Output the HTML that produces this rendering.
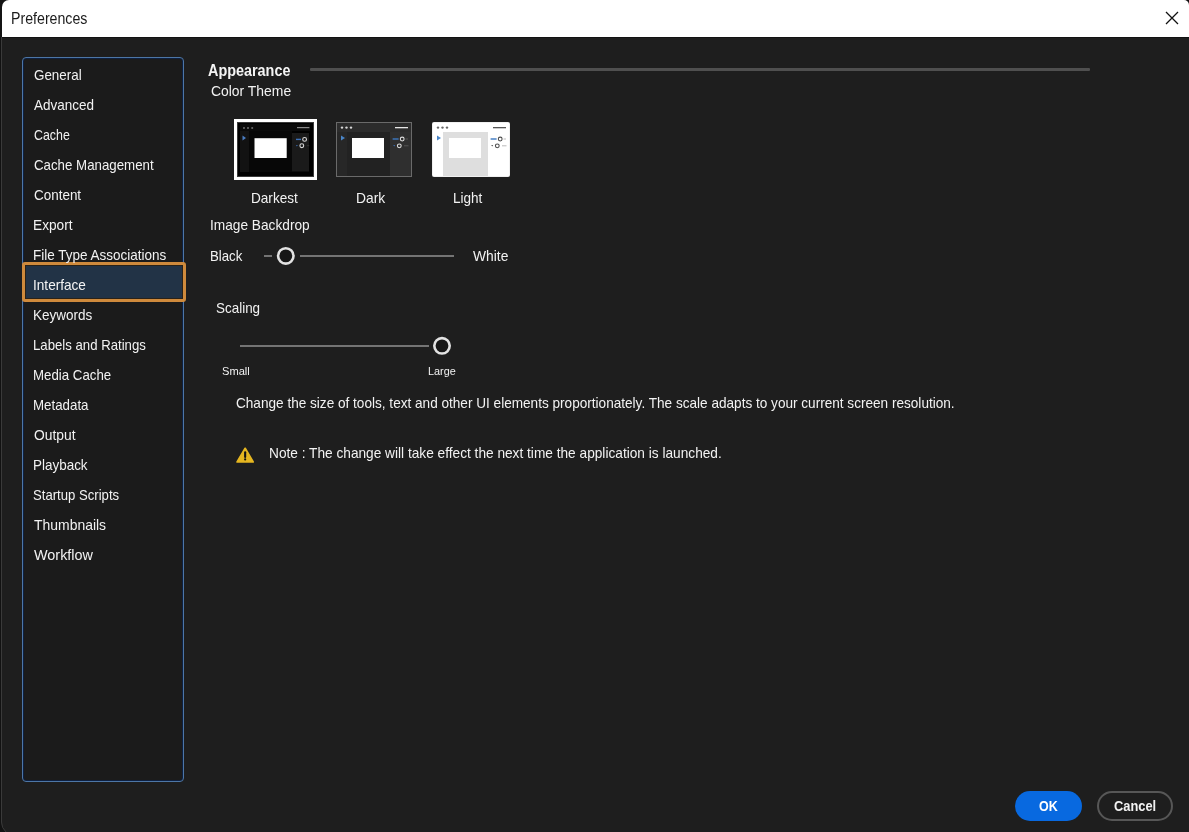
<!DOCTYPE html>
<html><head><meta charset="utf-8">
<style>
html,body{margin:0;padding:0;}
body{width:1189px;height:832px;overflow:hidden;background:#1e1e1e;position:relative;font-family:"Liberation Sans",sans-serif;}
.a{position:absolute;white-space:nowrap;line-height:1;transform-origin:0 0;filter:grayscale(1);}
#titlebar{position:absolute;left:0;top:0;width:1189px;height:37px;background:#fff;border-top-right-radius:5px;}#cornerR{position:absolute;left:1181px;top:0;width:8px;height:8px;background:#111;}
#leftedge{position:absolute;left:0;top:0;width:1px;height:832px;background:#121212;}#ttl{position:absolute;left:0;top:0;width:2px;height:37px;background:#141414;}#tline{position:absolute;left:0;top:37px;width:1189px;height:1px;background:#121212;}
#leftedge2{position:absolute;left:1px;top:37px;width:1px;height:795px;background:#3a3a3a;}
#corner{position:absolute;left:0;top:0;width:10px;height:10px;background:#151515;}
#cornerw{position:absolute;left:2px;top:0;width:16px;height:16px;background:#fff;border-top-left-radius:7px;}
.side{position:absolute;left:22px;top:57px;width:160px;height:723px;border:1px solid #4d76a6;border-radius:4px;background:#1b1b1b;box-shadow:inset 0 0 0 1px #0e2040;}
.item{position:absolute;left:33px;font-size:13.4px;color:#e3e3e3;}
.hl{position:absolute;left:22px;top:262px;width:158px;height:34px;border:3px solid #cf8a3c;border-radius:3px;background:#223346;box-shadow:inset 0 0 0 1px #2a2218;}
.t14{font-size:13.9px;color:#e3e3e3;}
</style></head><body>
<div id="cornerR"></div><div id="titlebar"></div>
<div id="corner"></div><div id="cornerw"></div>
<div id="leftedge"></div><div id="ttl"></div><div id="tline"></div><div id="leftedge2"></div><svg style="position:absolute;left:0;top:822px" width="10" height="10" viewBox="0 0 10 10"><path d="M0 0H1.5Q1.5 6 6 10H0Z" fill="#121212"/><path d="M1.5 0Q1.5 6 6 10" fill="none" stroke="#3a3a3a" stroke-width="1"/></svg>
<svg style="position:absolute;left:1165px;top:11px" width="14" height="14" viewBox="0 0 14 14"><path d="M1 1L13 13M13 1L1 13" stroke="#111" stroke-width="1.3" fill="none"/></svg>

<div class="side"></div>
<div class="hl"></div>

<!-- Appearance -->
<div style="position:absolute;left:310px;top:68px;width:780px;height:3px;background:#4f4f4f;border-radius:1px;"></div>

<div id="thumbs"><svg style="position:absolute;left:234px;top:119px" width="84" height="62" viewBox="0 0 84 62"><rect x="0" y="0" width="83" height="61" fill="#fff"/><rect x="3" y="3" width="77" height="55" fill="#3a3a3a"/><rect x="4" y="4" width="75" height="53" fill="#000"/><rect x="6" y="5" width="70" height="7" fill="#0a0a0a"/><circle cx="10" cy="9" r="1.05" fill="#6a6a6a"/><circle cx="14" cy="9" r="1.05" fill="#6a6a6a"/><circle cx="18.19999999999999" cy="9" r="1.05" fill="#6a6a6a"/><rect x="63" y="8" width="12.4" height="1.2" fill="#8a8a8a"/><rect x="6" y="12" width="9" height="41" fill="#121212"/><rect x="15" y="12" width="43" height="41" fill="#070707"/><rect x="58" y="14" width="17" height="38.5" fill="#1a1a1a"/><path d="M8.5 16.5L12 19L8.5 21.5Z" fill="#4a7cc0"/><rect x="20.5" y="19.19999999999999" width="32.2" height="19.8" fill="#fff"/><rect x="62" y="19.69999999999999" width="5" height="1.4" fill="#3c70b8"/><circle cx="70.60000000000002" cy="20.400000000000006" r="1.9" fill="none" stroke="#d8d8d8" stroke-width="1.1"/><path d="M62 26L63.80000000000001 26L62.89999999999998 27.5Z" fill="#3c6cb0"/><circle cx="67.80000000000001" cy="26.69999999999999" r="1.9" fill="none" stroke="#d8d8d8" stroke-width="1.1"/><rect x="72.80000000000001" y="26.19999999999999" width="2.4" height="1" fill="#333"/></svg><svg style="position:absolute;left:336px;top:122px" width="76" height="55" viewBox="0 0 76 55"><rect x="0" y="0" width="76" height="55" rx="0" fill="#6a6a6a"/><rect x="1" y="1" width="74" height="53" fill="#2c2c2c"/><circle cx="6" cy="5.6" r="1.2" fill="#d8d8d8"/><circle cx="10.5" cy="5.6" r="1.2" fill="#d8d8d8"/><circle cx="15" cy="5.6" r="1.2" fill="#d8d8d8"/><rect x="59" y="5" width="13" height="1.3" fill="#e6e6e6"/><rect x="1" y="10" width="74" height="44" fill="#222"/><rect x="1" y="10" width="10" height="44" fill="#272727"/><rect x="54" y="10" width="21" height="44" fill="#2f2f2f"/><path d="M5 13.5L9 16L5 18.5Z" fill="#4a86c8"/><rect x="16" y="16" width="32" height="20" fill="#fff"/><rect x="56.6" y="16.3" width="6" height="1.4" fill="#3c78c0"/><circle cx="66.2" cy="17" r="1.9" fill="none" stroke="#e0e0e0" stroke-width="1.05"/><rect x="69.5" y="16.5" width="2.5" height="1" fill="#555"/><path d="M57.2 23.0L59.2 23.0L58.2 24.6Z" fill="#3c6cb0"/><circle cx="63.3" cy="23.8" r="1.9" fill="none" stroke="#e0e0e0" stroke-width="1.05"/><rect x="68" y="23.3" width="4.5" height="1" fill="#555"/></svg><svg style="position:absolute;left:432px;top:122px" width="78" height="55" viewBox="0 0 78 55"><rect x="0" y="0" width="78" height="55" rx="2" fill="#f0f0f0"/><rect x="1" y="1" width="76" height="53" fill="#fff"/><circle cx="6" cy="5.6" r="1.2" fill="#666"/><circle cx="10.5" cy="5.6" r="1.2" fill="#666"/><circle cx="15" cy="5.6" r="1.2" fill="#666"/><rect x="61" y="5" width="13" height="1.3" fill="#555"/><rect x="1" y="10" width="76" height="44" fill="#dedede"/><rect x="1" y="10" width="10" height="44" fill="#fff"/><rect x="56" y="10" width="21" height="44" fill="#fff"/><path d="M5 13.5L9 16L5 18.5Z" fill="#4a86c8"/><rect x="17" y="16" width="32" height="20" fill="#fff"/><rect x="58.6" y="16.3" width="6" height="1.4" fill="#3c78c0"/><circle cx="68.2" cy="17" r="1.9" fill="none" stroke="#4a4a4a" stroke-width="1.05"/><rect x="71.5" y="16.5" width="2.5" height="1" fill="#bbb"/><path d="M59.2 23.0L61.2 23.0L60.2 24.6Z" fill="#555"/><circle cx="65.3" cy="23.8" r="1.9" fill="none" stroke="#4a4a4a" stroke-width="1.05"/><rect x="70" y="23.3" width="4.5" height="1" fill="#bbb"/></svg></div>


<div style="position:absolute;left:264px;top:255px;width:8px;height:2px;background:#747474;"></div>
<svg style="position:absolute;left:275px;top:245px" width="22" height="22" viewBox="0 0 22 22"><circle cx="10.8" cy="10.9" r="7.7" fill="#171717" stroke="#e2e2e2" stroke-width="2.6"/></svg>
<div style="position:absolute;left:300px;top:255px;width:154px;height:2px;background:#747474;"></div>

<div style="position:absolute;left:240px;top:344.5px;width:189px;height:2px;background:#747474;"></div>
<svg style="position:absolute;left:431px;top:335px" width="22" height="22" viewBox="0 0 22 22"><circle cx="11" cy="10.85" r="7.7" fill="#171717" stroke="#e2e2e2" stroke-width="2.6"/></svg>


<svg style="position:absolute;left:235px;top:446px" width="20" height="18" viewBox="0 0 20 18"><path d="M10.15 2.3L18.2 16H2.1Z" fill="#e6b720" stroke="#e6b720" stroke-width="1.7" stroke-linejoin="round"/><path d="M10.15 6.2V11" stroke="#141414" stroke-width="2.1" stroke-linecap="round"/><circle cx="10.15" cy="13.4" r="1.1" fill="#141414"/></svg>

<div style="position:absolute;left:1015px;top:791px;width:67px;height:30px;border-radius:15px;background:#0869e0;"></div>
<div style="position:absolute;left:1097px;top:791px;width:72px;height:26px;border:2px solid #575757;border-radius:15px;"></div>
<div class="a" style="left:11.00px;top:11.00px;font-size:15.7px;font-weight:400;color:#1c1c1c;transform:scaleX(0.9036)">Preferences</div>
<div class="a" style="left:33.80px;top:68.00px;font-size:14.5px;font-weight:400;color:#f2f2f2;transform:scaleX(0.9235)">General</div>
<div class="a" style="left:33.70px;top:98.00px;font-size:14.5px;font-weight:400;color:#f2f2f2;transform:scaleX(0.9297)">Advanced</div>
<div class="a" style="left:33.70px;top:128.00px;font-size:14.5px;font-weight:400;color:#f2f2f2;transform:scaleX(0.8548)">Cache</div>
<div class="a" style="left:33.90px;top:158.00px;font-size:14.5px;font-weight:400;color:#f2f2f2;transform:scaleX(0.9160)">Cache Management</div>
<div class="a" style="left:33.70px;top:188.00px;font-size:14.5px;font-weight:400;color:#f2f2f2;transform:scaleX(0.9275)">Content</div>
<div class="a" style="left:33.36px;top:218.00px;font-size:14.5px;font-weight:400;color:#f2f2f2;transform:scaleX(0.9439)">Export</div>
<div class="a" style="left:32.97px;top:248.00px;font-size:14.5px;font-weight:400;color:#f2f2f2;transform:scaleX(0.9310)">File Type Associations</div>
<div class="a" style="left:32.96px;top:278.00px;font-size:14.5px;font-weight:400;color:#f4f4f4;transform:scaleX(0.9382)">Interface</div>
<div class="a" style="left:33.37px;top:308.00px;font-size:14.5px;font-weight:400;color:#f2f2f2;transform:scaleX(0.9317)">Keywords</div>
<div class="a" style="left:33.39px;top:338.00px;font-size:14.5px;font-weight:400;color:#f2f2f2;transform:scaleX(0.9089)">Labels and Ratings</div>
<div class="a" style="left:32.98px;top:368.00px;font-size:14.5px;font-weight:400;color:#f2f2f2;transform:scaleX(0.9155)">Media Cache</div>
<div class="a" style="left:32.98px;top:398.00px;font-size:14.5px;font-weight:400;color:#f2f2f2;transform:scaleX(0.9183)">Metadata</div>
<div class="a" style="left:33.90px;top:428.00px;font-size:14.5px;font-weight:400;color:#f2f2f2;transform:scaleX(0.9545)">Output</div>
<div class="a" style="left:33.37px;top:458.00px;font-size:14.5px;font-weight:400;color:#f2f2f2;transform:scaleX(0.9276)">Playback</div>
<div class="a" style="left:32.89px;top:488.00px;font-size:14.5px;font-weight:400;color:#f2f2f2;transform:scaleX(0.9053)">Startup Scripts</div>
<div class="a" style="left:33.80px;top:518.00px;font-size:14.5px;font-weight:400;color:#f2f2f2;transform:scaleX(0.9613)">Thumbnails</div>
<div class="a" style="left:33.80px;top:548.00px;font-size:14.5px;font-weight:400;color:#f2f2f2;transform:scaleX(0.9933)">Workflow</div>
<div class="a" style="left:208.10px;top:63.00px;font-size:15.7px;font-weight:700;color:#f4f4f4;transform:scaleX(0.9178)">Appearance</div>
<div class="a" style="left:210.60px;top:84.00px;font-size:14.5px;font-weight:400;color:#f2f2f2;transform:scaleX(0.9590)">Color Theme</div>
<div class="a" style="left:250.96px;top:191.00px;font-size:14.5px;font-weight:400;color:#f2f2f2;transform:scaleX(0.9367)">Darkest</div>
<div class="a" style="left:356.45px;top:191.00px;font-size:14.5px;font-weight:400;color:#f2f2f2;transform:scaleX(0.9533)">Dark</div>
<div class="a" style="left:453.37px;top:191.00px;font-size:14.5px;font-weight:400;color:#f2f2f2;transform:scaleX(0.9323)">Light</div>
<div class="a" style="left:209.76px;top:218.00px;font-size:14.5px;font-weight:400;color:#f2f2f2;transform:scaleX(0.9442)">Image Backdrop</div>
<div class="a" style="left:209.79px;top:249.00px;font-size:14.5px;font-weight:400;color:#f2f2f2;transform:scaleX(0.9114)">Black</div>
<div class="a" style="left:473.00px;top:249.00px;font-size:14.5px;font-weight:400;color:#f2f2f2;transform:scaleX(0.9541)">White</div>
<div class="a" style="left:216.12px;top:301.00px;font-size:14.5px;font-weight:400;color:#f2f2f2;transform:scaleX(0.9272)">Scaling</div>
<div class="a" style="left:222.00px;top:365.00px;font-size:11.6px;font-weight:400;color:#f2f2f2;transform:scaleX(0.9586)">Small</div>
<div class="a" style="left:428.37px;top:365.00px;font-size:11.6px;font-weight:400;color:#f2f2f2;transform:scaleX(0.9345)">Large</div>
<div class="a" style="left:235.50px;top:396.00px;font-size:14.5px;font-weight:400;color:#f2f2f2;transform:scaleX(0.9372)">Change the size of tools, text and other UI elements proportionately. The scale adapts to your current screen resolution.</div>
<div class="a" style="left:269.06px;top:446.00px;font-size:14.5px;font-weight:400;color:#f2f2f2;transform:scaleX(0.9435)">Note : The change will take effect the next time the application is launched.</div>
<div class="a" style="left:1038.70px;top:799.00px;font-size:14.5px;font-weight:700;color:#ffffff;transform:scaleX(0.8591)">OK</div>
<div class="a" style="left:1114.20px;top:799.00px;font-size:14.5px;font-weight:700;color:#f2f2f2;transform:scaleX(0.8872)">Cancel</div>
</body></html>
